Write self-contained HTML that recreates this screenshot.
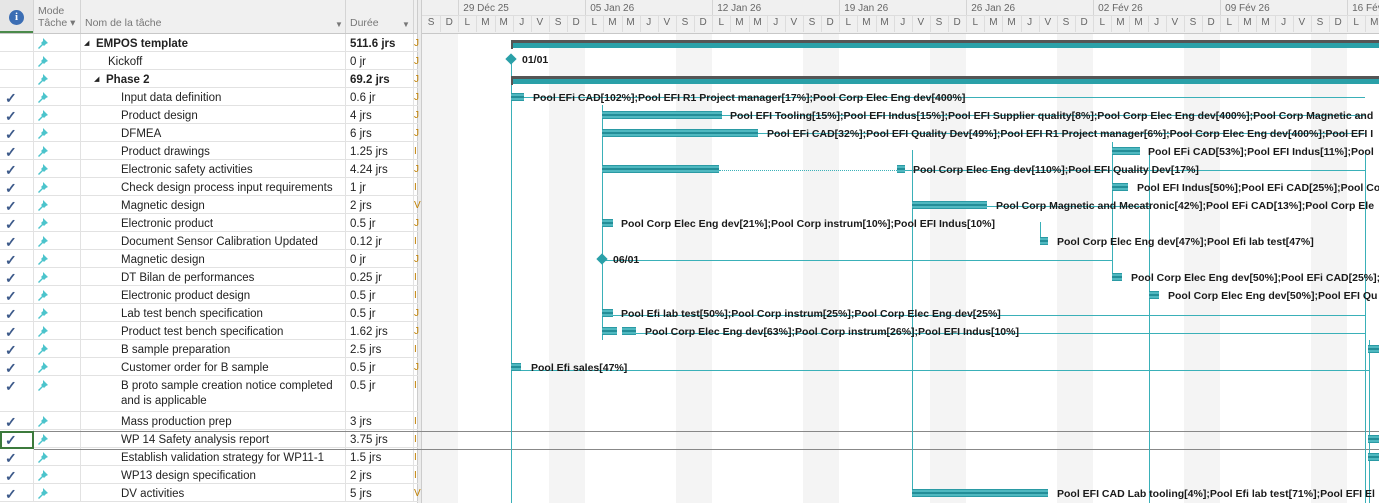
<!DOCTYPE html>
<html><head><meta charset="utf-8">
<style>
*{margin:0;padding:0;box-sizing:border-box}
body{width:1379px;height:503px;overflow:hidden;background:#fff;font-family:"Liberation Sans",sans-serif;position:relative}
.a{position:absolute;white-space:nowrap}
.hdr{background:#f0f0f0;color:#666;font-size:10.5px}
.cell{position:absolute;font-size:11.5px;color:#222;white-space:nowrap;line-height:18px}
.lbl{position:absolute;font-size:10.5px;font-weight:bold;color:#1a1a1a;white-space:nowrap;line-height:12px}
.bar{position:absolute;height:8px;background:#4fb8c0;border-top:1px solid #2a9aa4;border-bottom:1px solid #2a9aa4}
.bar::after{content:"";position:absolute;left:0;right:0;top:2px;height:2px;background:#238e98}
.vl{position:absolute;width:1px;background:#3ab0b8}
.hl{position:absolute;height:1px;background:#3ab0b8}
</style></head><body>
<div id="root"></div>
<script>
(function(){
var R=document.getElementById('root');var h='';
function d(s,c,t){h+='<div class="'+(c||'a')+'" style="'+s+'">'+(t||'')+'</div>';}
d('left:0;top:0;width:1379px;height:33px;','a hdr');
d('left:0;top:0;width:33px;height:33px;background:#e6e6e6;border-bottom:2px solid #4a8a4a');
d('left:9px;top:10px;width:15px;height:15px;border-radius:50%;background:#3c6eb4;color:#fff;font:bold 11px Liberation Serif;text-align:center;line-height:15px','a','i');
d('left:38px;top:5px;color:#777;font-size:10.5px','a','Mode');
d('left:38px;top:17px;color:#777;font-size:10.5px','a','Tâche ▾');
d('left:85px;top:17px;color:#777;font-size:10.5px','a','Nom de la tâche');
d('left:335px;top:20px;color:#777;font-size:8px','a','▼');
d('left:350px;top:17px;color:#777;font-size:10.5px','a','Durée');
d('left:402px;top:20px;color:#777;font-size:8px','a','▼');
[33,80,345,413].forEach(function(x){d('left:'+x+'px;top:0;width:1px;height:33px;background:#d4d4d4')});
d('left:0;top:33px;width:418px;height:1px;background:#c8c8c8');
d('left:417px;top:0;width:5px;height:503px;background:#ececec;border-left:1px solid #ccc;border-right:1px solid #ccc');
var dw=18.14,x0=422,days='SDLMMJV';
for(var i=0;i<54;i++){var x=x0+i*dw;var c=days[i%7];
 if(i%7<2) d('left:'+x+'px;top:33px;width:'+dw+'px;height:470px;background:#f4f4f4');
 d('left:'+x+'px;top:17px;width:'+dw+'px;text-align:center;color:#666;font-size:10px','a',c);
 d('left:'+(x+dw)+'px;top:15px;width:1px;height:17px;background:#ddd');}
['29 Déc 25','05 Jan 26','12 Jan 26','19 Jan 26','26 Jan 26','02 Fév 26','09 Fév 26','16 Fév 26'].forEach(function(t,i){var x=x0+2*dw+i*7*dw;
 d('left:'+(x+5)+'px;top:3px;color:#666;font-size:10px','a',t);d('left:'+x+'px;top:0;width:1px;height:15px;background:#d4d4d4')});
d('left:422px;top:15px;width:957px;height:1px;background:#ddd');
d('left:422px;top:33px;width:957px;height:1px;background:#c8c8c8');
var rows=[['EMPOS template','511.6 jrs',1,0,'J'],['Kickoff','0 jr',2,0,'J'],['Phase 2','69.2 jrs',2,0,'J',1],
['Input data definition','0.6 jr',3,1,'J'],['Product design','4 jrs',3,1,'J'],['DFMEA','6 jrs',3,1,'J'],['Product drawings','1.25 jrs',3,1,'I'],
['Electronic safety activities','4.24 jrs',3,1,'J'],['Check design process  input requirements','1 jr',3,1,'I'],['Magnetic design','2 jrs',3,1,'V'],
['Electronic product','0.5 jr',3,1,'J'],['Document Sensor Calibration Updated','0.12 jr',3,1,'I'],['Magnetic design','0 jr',3,1,'J'],
['DT Bilan de performances','0.25 jr',3,1,'I'],['Electronic product design','0.5 jr',3,1,'I'],['Lab test bench specification','0.5 jr',3,1,'J'],
['Product test bench specification','1.62 jrs',3,1,'J'],['B sample preparation','2.5 jrs',3,1,'I'],['Customer order for B sample','0.5 jr',3,1,'J'],
['B proto sample creation notice completed|and  is applicable','0.5 jr',3,1,'I',0,2],['Mass production prep','3 jrs',3,1,'I'],
['WP 14 Safety analysis report','3.75 jrs',3,1,'I'],['Establish validation strategy for WP11-1','1.5 jrs',3,1,'I'],['WP13 design specification','2 jrs',3,1,'I'],['DV activities','5 jrs',3,1,'V']];
var y=34;rows.forEach(function(r,i){var hh=(r[6]||1)*18;var bold=(i==0||i==2);
 var ind=r[2]==1?88:r[2]==2?(i==2?98:108):121;
 if(bold) d('left:'+(ind-4)+'px;top:'+(y+1)+'px;font-size:7px;','cell','◢');
 r[0].split('|').forEach(function(t,k){d('left:'+(bold?ind+8:ind)+'px;top:'+(y+1+k*15)+'px;'+(bold?'font-weight:bold':''),'cell',t)});
 d('left:350px;top:'+(y+1)+'px;'+(bold?'font-weight:bold':''),'cell',r[1]);
 d('left:414px;top:'+(y+1)+'px;color:#c08000;font-size:10px','cell',r[4]);
 if(r[3]) d('left:5px;top:'+(y+1)+'px;color:#3d5a8a;font-size:14px;font-weight:bold','cell','✓');
 h+='<svg class="a" style="left:37px;top:'+(y+3)+'px" width="12" height="12" viewBox="0 0 12 12"><path d="M6 1l5 5-2 1-2 2-1-1-4 4-1-1 4-4-1-1 2-2z" fill="#4cc4cc"/></svg>';
 y+=hh; d('left:0;top:'+(y-1)+'px;width:418px;height:1px;background:#e2e2e2');
 [33,80,345,413].forEach(function(x){d('left:'+x+'px;top:'+(y-hh)+'px;width:1px;height:'+hh+'px;background:#e2e2e2')});
});
d('left:0;top:431px;width:34px;height:18px;border:2px solid #3c7a3c');
d('left:34px;top:431px;width:1345px;height:1px;background:#888');
d('left:34px;top:449px;width:1345px;height:1px;background:#888');
[[511,60,503],[602,105,340],[912,150,492],[1040,222,245],[1112,142,280],[1149,150,503],[1365,150,503],[1369,340,503]].forEach(function(v){d('left:'+v[0]+'px;top:'+v[1]+'px;height:'+(v[2]-v[1])+'px','vl')});
[[511,1365,97],[722,1365,115],[758,1365,133],[905,1365,170],[987,1149,206],[602,1112,260],[602,1365,315],[636,1365,333],[521,1369,370]].forEach(function(v){d('left:'+v[0]+'px;top:'+v[2]+'px;width:'+(v[1]-v[0])+'px','hl')});
[40,76].forEach(function(t){d('left:511px;top:'+t+'px;width:868px;height:3px;background:#555');d('left:511px;top:'+(t+3)+'px;width:868px;height:5px;background:#2aa0a8');d('left:511px;top:'+t+'px;width:2px;height:9px;background:#555')});
d('left:507px;top:55px;width:8px;height:8px;background:#2aa0a8;transform:rotate(45deg)');
d('left:522px;top:54px','lbl','01/01');
d('left:598px;top:255px;width:8px;height:8px;background:#2aa0a8;transform:rotate(45deg)');
d('left:613px;top:254px','lbl','06/01');
var B=[[3,511,524,'Pool EFi CAD[102%];Pool EFI R1 Project manager[17%];Pool Corp Elec Eng dev[400%]',533],
[4,602,722,'Pool EFI Tooling[15%];Pool EFI Indus[15%];Pool EFI Supplier quality[8%];Pool Corp Elec Eng dev[400%];Pool Corp Magnetic and',730],
[5,602,758,'Pool EFi CAD[32%];Pool EFI Quality Dev[49%];Pool EFI R1 Project manager[6%];Pool Corp Elec Eng dev[400%];Pool EFI I',767],
[6,1112,1140,'Pool EFi CAD[53%];Pool EFI Indus[11%];Pool',1148],
[7,602,719,'',0],[7,897,905,'Pool Corp Elec Eng dev[110%];Pool EFI Quality Dev[17%]',913],
[8,1112,1128,'Pool EFI Indus[50%];Pool EFi CAD[25%];Pool Co',1137],
[9,912,987,'Pool Corp Magnetic and Mecatronic[42%];Pool EFi CAD[13%];Pool Corp Ele',996],
[10,602,613,'Pool Corp Elec Eng dev[21%];Pool Corp instrum[10%];Pool EFI Indus[10%]',621],
[11,1040,1048,'Pool Corp Elec Eng dev[47%];Pool Efi lab test[47%]',1057],
[13,1112,1122,'Pool Corp Elec Eng dev[50%];Pool EFi CAD[25%];',1131],
[14,1149,1159,'Pool Corp Elec Eng dev[50%];Pool EFI Qu',1168],
[15,602,613,'Pool Efi lab test[50%];Pool Corp instrum[25%];Pool Corp Elec Eng dev[25%]',621],
[16,602,617,'',0],[16,622,636,'Pool Corp Elec Eng dev[63%];Pool Corp instrum[26%];Pool EFI Indus[10%]',645],
[17,1368,1379,'',0],[18,511,521,'Pool Efi sales[47%]',531],
[21,1368,1379,'',0],[22,1368,1379,'',0],[24,912,1048,'Pool EFI CAD Lab tooling[4%];Pool Efi lab test[71%];Pool EFI El',1057]];
function rowTop(r){return 34+r*18+(r>19?18:0);}
B.forEach(function(b){var t=rowTop(b[0]);d('left:'+b[1]+'px;top:'+(t+5)+'px;width:'+(b[2]-b[1])+'px','bar');
 if(b[3]) d('left:'+b[4]+'px;top:'+(t+4)+'px','lbl',b[3]);});
d('left:719px;top:170px;width:178px;border-top:1px dotted #3ab0b8');
R.innerHTML=h;
})();
</script>
</body></html>
